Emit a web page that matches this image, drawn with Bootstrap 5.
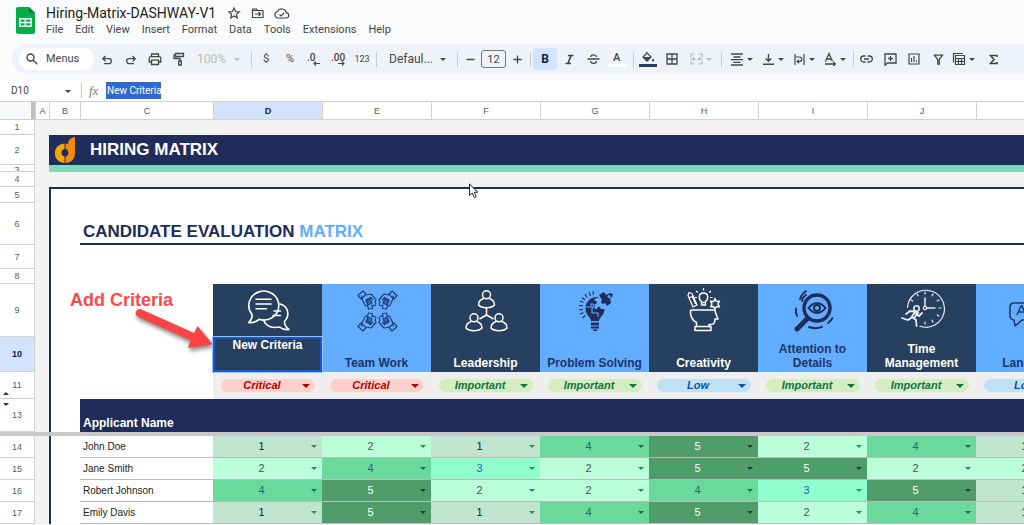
<!DOCTYPE html>
<html lang="en">
<head>
<meta charset="utf-8">
<meta name="viewport" content="width=device-width, initial-scale=1">
<title>Hiring-Matrix-DASHWAY-V1</title>
<link href="https://cdn.jsdelivr.net/npm/bootstrap@5.3.0/dist/css/bootstrap.min.css" rel="stylesheet">
<style>
  :root { --navy: #202c5a; --slate: #28405f; --sky: #62adff; --grid: #cfd1d3; --ink: #444746; }
  body { background: #f9fbfd; color: var(--ink); font-family: Roboto, sans-serif; font-size: 12px; line-height: 16px; overflow: hidden; }
  svg { display: block; flex: none; }
  button, select, input { font: inherit; color: inherit; border: 0; background: none; padding: 0; }

  /* title and menus */
  .app-head { padding: 5px 12px 0 16px; height: 44px; }
  .app-logo { margin: 2px 11px 0 0; }
  .doc-title { font-size: 14px; font-weight: 400; line-height: 16px; color: #1f1f1f; }
  .doc-icons { margin-left: 12px; }
  .menus { gap: 12px; font-size: 11px; margin-top: 1px; }
  .menus a { color: var(--ink); text-decoration: none; }

  /* toolbar */
  .tools { background: #eff3f9; height: 30px; margin-left: 12px; padding-left: 7px; border-radius: 15px 0 0 15px; margin-bottom: 6px; overflow: hidden; }
  .search { background: #fff; width: 75px; height: 22px; border-radius: 11px; padding-left: 7px; gap: 8px; margin-right: 1px; flex: none; font-size: 11px; }
  .tool { width: 24px; height: 22px; display: flex; align-items: center; justify-content: center; flex: none; font-size: 11px; border-radius: 3px; }
  .tool-wide { width: 31px; justify-content: flex-start; gap: 3px; padding-left: 2px; }
  .tool.on { background: #d3e3fd; color: #041e49; }
  .rule { width: 1px; height: 15px; background: #c7cbd0; margin: 0 2px; flex: none; }
  .caret { width: 0; height: 0; border: 3px solid transparent; border-top-color: currentColor; border-bottom-width: 0; flex: none; }
  .pick { position: relative; flex: none; }
  .pick select { appearance: none; width: 100%; }
  .pick .caret { position: absolute; top: 50%; right: 9px; margin-top: -1px; pointer-events: none; }
  .zoom-pick { width: 58px; padding-left: 6px; color: #b7babd; font-size: 12px; }
  .font-pick { width: 76px; padding-left: 10px; font-size: 12px; }
  .size-box { width: 25px; height: 18px; border: 1px solid #747775; border-radius: 3px; text-align: center; font-size: 11px; margin-left: 1px; flex: none; }

  /* formula bar */
  .formula { background: #fff; height: 21px; padding-left: 11px; font-size: 10px; }
  .name-pick { width: 68px; }
  .name-pick .caret { right: 8px; }
  .cell-text { background: #3367d6; color: #fff; width: 55px; height: 17px; padding-left: 1px; margin-left: 4px; }

  /* sheet */
  .sheet { position: relative; overflow: hidden; background: #f2f2f2; font-family: "Liberation Sans", Arial, sans-serif; }
  .cells { table-layout: fixed; width: max(100%, 1085px); border-collapse: separate; border-spacing: 0; color: #222; font-size: 10px; line-height: 12px; }
  .cells td, .cells th { padding: 0; font-weight: 400; overflow: hidden; }
  .c-num { width: 35px; } .c-a { width: 14px; } .c-b { width: 31px; } .c-c { width: 133px; } .c-v { width: 109px; }
  .cells thead th { height: 19px; background: #fff; border: 0 solid var(--grid); border-width: 1px 0 1px 1px; text-align: center; font-size: 9px; color: #575b5f; }
  .cells thead th.corner { background: #f8f9fa; border-left: 0; border-right: 4px solid #c0c0c0; }
  .cells thead th.on, .cells .num.on { background: #d3e3fd; color: #041e49; font-weight: 700; }
  .cells .num { position: relative; background: #fff; border-right: 1px solid var(--grid); border-bottom: 1px solid var(--grid); text-align: center; font-size: 9px; color: #575b5f; }
  .num .clip { height: 6px; line-height: 10px; overflow: hidden; }
  .mark-up, .mark-down { position: absolute; left: 3px; border: 3px solid transparent; color: #333; }
  .mark-up { bottom: 3px; border-bottom-color: currentColor; border-top-width: 0; }
  .mark-down { top: 4px; border-top-color: currentColor; border-bottom-width: 0; }
  .h7 { height: 7px; } .h15 { height: 15px; } .h16 { height: 16px; } .h22 { height: 22px; } .h24 { height: 24px; } .h27 { height: 27px; }
  .h30 { height: 30px; } .h33 { height: 33px; } .h35 { height: 35px; } .h42 { height: 42px; } .h53 { height: 53px; }
  .paper { background: #fff; }
  .edge { border-left: 2px solid var(--navy); background: #fff; }
  .top-edge { border-top: 2px solid var(--navy); }
  .banner { background: var(--navy); color: #fff; font-size: 17px; line-height: 30px; font-weight: 700; padding-left: 6px; gap: 14px; }
  .teal { background: #80d8bc; }
  .section { font-size: 17px; line-height: 22px; font-weight: 700; color: var(--navy); padding-left: 3px; border-bottom: 2px solid var(--navy); height: 42px; padding-top: 18px; }
  .section span { color: var(--sky); }
  .cells td.dark, .cells th.dark { background: var(--slate); color: #fff; }
  .cells td.light, .cells th.light { background: var(--sky); color: #203468; }
  .pic { vertical-align: top; }
  .pic svg { margin: 3px auto 0; }
  .cells th.crit { font-size: 12px; line-height: 14px; font-weight: 700; text-align: center; vertical-align: bottom; padding-bottom: 2px; }
  .cells th.crit.picked { vertical-align: top; padding-top: 1px; box-shadow: inset 0 0 0 2px #1259cf; outline: 1px solid #9cc0f8; position: relative; z-index: 1; overflow: visible; }
  .weights { background: #eee; }
  .pill { position: relative; display: block; margin: 0 7px 0 8px; height: 13px; border-radius: 7px; font: italic 700 11px/13px "Liberation Sans", Arial, sans-serif; }
  .pill select, .score select { appearance: none; display: block; width: 100%; height: 100%; text-align: center; text-align-last: center; padding-right: 12px; }
  .pill .caret, .score .caret { position: absolute; top: 50%; margin-top: -2px; pointer-events: none; }
  .pill .caret { right: 5px; border-width: 4px 4px 0; }
  .Critical { background: #ffcfc9; color: #b10202; } .Important { background: #d4edbc; color: #11734b; } .Low { background: #bfe1f6; color: #0a53a8; }
  .cells th.who-head { background: var(--navy); color: #fff; font-size: 12px; line-height: 14px; font-weight: 700; vertical-align: bottom; padding: 0 0 2px 3px; }
  .freeze { height: 4px; background: #c8c8c8; }
  .cells th.who { background: #fff; padding-left: 3px; color: #222; }
  .cells .line { border-bottom: 1px solid #b9bcbb; }
  .score { position: relative; display: block; height: 21px; font-size: 11px; line-height: 21px; }
  .score .caret { right: 5px; }
  .v1 { background: #bfe5cf; color: #222; } .v1 .caret { color: #3b8a5f; }
  .v2 { background: #bbffda; color: #4d5548; } .v2 .caret { color: #109b4c; }
  .v3 { background: #8fffce; color: #2463b4; } .v3 .caret { color: #189a62; }
  .v4 { background: #6ada9c; color: #256573; } .v4 .caret { color: #1f6b45; }
  .v5 { background: #4f9d69; color: #fff; } .v5 .caret { color: #20402e; }
  .note { position: absolute; left: 70px; top: 189px; color: #fb4a4a; font-weight: 700; font-size: 18px; line-height: 20px; }
  .note-arrow { position: absolute; left: 130px; top: 203px; filter: drop-shadow(1px 3px 2px #0007); }
  .pointer { position: absolute; left: 468px; top: 82px; }
</style>
</head>
<body>
<header class="app-head d-flex">
  <svg class="app-logo" width="19" height="27" viewBox="0 0 19 27"><path d="M2 0h11l6 6v19a2 2 0 0 1-2 2H2a2 2 0 0 1-2-2V2a2 2 0 0 1 2-2z" fill="#0caa4b"/><path d="M13 0l6 6h-6z" fill="#07803a"/><path d="M3 11h13v9H3zM4.500 12.500v2.200h4.200v-2.200zm5.700 0v2.200h4.300v-2.200zm-5.700 3.700v2.300h4.200v-2.300zm5.700 0v2.300h4.300v-2.300z" fill="#fff" fill-rule="evenodd"/></svg>
  <div>
    <div class="d-flex align-items-center">
      <h1 class="doc-title m-0">Hiring-Matrix-DASHWAY-V1</h1>
      <svg class="doc-icons" width="62" height="14" viewBox="0 0 62 14" fill="none" stroke="#444746" stroke-width="1.200"><path d="M6 2l1.500 3.500 3.800.3-2.900 2.500.9 3.700L6 10l-3.300 2 .9-3.700L.7 5.800l3.800-.3z"/><path d="M24.500 3h4l1.300 1.500H35v7H24.500zM24.500 4.500h5M27 8h5.500m-2-2l2 2-2 2"/><path d="M52 12h6a2.600 2.600 0 0 0 .3-5.200A4.700 4.700 0 0 0 49.500 5.500 3.300 3.300 0 0 0 50 12zM51.500 8.500l1.600 1.500 3-3"/></svg>
    </div>
    <nav class="menus d-flex" aria-label="Menus">
      <a href="#">File</a><a href="#">Edit</a><a href="#">View</a><a href="#">Insert</a><a href="#">Format</a><a href="#">Data</a><a href="#">Tools</a><a href="#">Extensions</a><a href="#">Help</a>
    </nav>
  </div>
</header>

<div class="tools d-flex align-items-center" role="toolbar" aria-label="Formatting">
  <button class="search d-flex align-items-center"><svg width="12" height="12" viewBox="0 0 12 12" fill="none" stroke="#444746" stroke-width="1.400"><circle cx="4.500" cy="4.500" r="3.500"/><path d="M7 7l4.300 4.300"/></svg>Menus</button>
  <button class="tool" aria-label="Undo"><svg width="12" height="12" viewBox="0 0 12 12" fill="none" stroke="#444746" stroke-width="1.300"><path d="M4.500 3L1.800 5.700l2.700 2.700M2 5.700h5.800a2.500 2.500 0 0 1 0 5H3"/></svg></button>
  <button class="tool" aria-label="Redo"><svg width="12" height="12" viewBox="0 0 12 12" fill="none" stroke="#444746" stroke-width="1.300"><path d="M7.500 3l2.700 2.700-2.700 2.700M10 5.700H4.200a2.500 2.500 0 0 0 0 5H9"/></svg></button>
  <button class="tool" aria-label="Print"><svg width="14" height="14" viewBox="0 0 14 14" fill="none" stroke="#444746" stroke-width="1.300"><path d="M3.500 4.500V2h7v2.500M3.500 10H1.200V6.200a1.500 1.500 0 0 1 1.500-1.500h8.600a1.500 1.500 0 0 1 1.500 1.500V10h-2.300M3.500 8.200h7v4.300h-7z"/></svg></button>
  <button class="tool" aria-label="Paint format"><svg width="12" height="14" viewBox="0 0 12 14" fill="none" stroke="#444746" stroke-width="1.300"><path d="M2.500 1.500h8v3h-8zM2.500 3H1v3.500h6V9M5.700 9h2.600v4H5.700z"/></svg></button>
  <div class="pick zoom-pick"><select aria-label="Zoom"><option>100%</option></select><i class="caret"></i></div>
  <i class="rule"></i>
  <button class="tool">$</button><button class="tool">%</button>
  <button class="tool" aria-label="Decrease decimals"><svg width="16" height="16" viewBox="0 0 16 16"><text x="1" y="10" font-size="10" font-weight="500" fill="#444746">.0</text><path d="M8 12.500h6M10 10.500l-2 2 2 2" fill="none" stroke="#444746" stroke-width="1.100"/></svg></button>
  <button class="tool" aria-label="Increase decimals"><svg width="16" height="16" viewBox="0 0 16 16"><text x="1" y="10" font-size="10" font-weight="500" fill="#444746">.00</text><path d="M8 12.500h6M12 10.500l2 2-2 2" fill="none" stroke="#444746" stroke-width="1.100"/></svg></button>
  <button class="tool" style="font-size:9px">123</button>
  <i class="rule"></i>
  <div class="pick font-pick"><select aria-label="Font"><option>Defaul...</option></select><i class="caret"></i></div>
  <i class="rule"></i>
  <button class="tool" style="width:20px" aria-label="Smaller"><svg width="9" height="9" viewBox="0 0 9 9"><path d="M.5 4.500h8" stroke="#444746" stroke-width="1.300"/></svg></button>
  <input class="size-box" value="12" aria-label="Font size">
  <button class="tool" style="width:22px" aria-label="Larger"><svg width="9" height="9" viewBox="0 0 9 9"><path d="M.5 4.500h8M4.500.5v8" stroke="#444746" stroke-width="1.300"/></svg></button>
  <i class="rule"></i>
  <button class="tool on fw-bold" style="font-size:12px">B</button>
  <button class="tool" aria-label="Italic"><svg width="9" height="11" viewBox="0 0 9 11" fill="none" stroke="#444746" stroke-width="1.700"><path d="M3 1.500h5.500M.5 9.500H6M6 1.500l-3 8"/></svg></button>
  <button class="tool" aria-label="Strikethrough"><svg width="13" height="12" viewBox="0 0 13 12" fill="none" stroke="#444746" stroke-width="1.300"><path d="M.5 6h12M9.500 3.800C9.200 2.500 8 1.800 6.500 1.800 4.700 1.800 3.600 2.700 3.600 4M3.500 8c.2 1.500 1.400 2.300 3 2.300 1.800 0 3-.9 3-2.300"/></svg></button>
  <button class="tool" style="margin-right:2px" aria-label="Text color"><svg width="18" height="17" viewBox="0 0 18 17"><text x="5" y="10" font-size="11" font-weight="500" fill="#444746">A</text><path d="M0 13h18v3H0z" fill="#fff"/></svg></button>
  <i class="rule"></i>
  <button class="tool" aria-label="Fill color"><svg width="18" height="17" viewBox="0 0 18 17"><path d="M7 1l5 5-4 4-4-4 4-4z" fill="none" stroke="#444746" stroke-width="1.300"/><path d="M4 6h8l-4 4zM14 7.500c1.600 2 1.600 3 0 3s-1.500-1 0-3z" fill="#444746"/><path d="M0 13h18v3H0z" fill="#28405f"/></svg></button>
  <button class="tool" aria-label="Borders"><svg width="12" height="12" viewBox="0 0 12 12" fill="none" stroke="#444746" stroke-width="1.300"><path d="M1 1h10v10H1zM6 1v10M1 6h10"/></svg></button>
  <button class="tool tool-wide ms-1" style="color:#b5b8bb" aria-label="Merge"><svg width="13" height="12" viewBox="0 0 13 12" fill="none" stroke="currentColor" stroke-width="1.200"><path d="M4.500 1H1v3M8.500 1H12v3M1 8v3h3.500M12 8v3H8.500M0 6h4.500M3 4.300L4.700 6 3 7.700M13 6H8.500M10 4.300L8.300 6 10 7.700"/></svg><i class="caret"></i></button>
  <i class="rule"></i>
  <button class="tool tool-wide ms-1" aria-label="Horizontal align"><svg width="14" height="14" viewBox="0 0 14 14" stroke="#444746" stroke-width="1.300"><path d="M1 2h12M3.500 5h7M1 7.700h12M3.500 10.300h7M1 13h12"/></svg><i class="caret"></i></button>
  <button class="tool tool-wide" aria-label="Vertical align"><svg width="14" height="14" viewBox="0 0 14 14" fill="none" stroke="#444746" stroke-width="1.400"><path d="M2 12.300h11M7.500 2v7M4.800 6.600l2.700 2.700 2.700-2.700"/></svg><i class="caret"></i></button>
  <button class="tool tool-wide" aria-label="Wrap"><svg width="14" height="14" viewBox="0 0 14 14" fill="none" stroke="#444746" stroke-width="1.200"><path d="M3 2v11M12 2v11M4 5h3.500a2 2 0 0 1 0 4.500H5.500M7 7.700L5.200 9.500 7 11.300"/></svg><i class="caret"></i></button>
  <button class="tool tool-wide" aria-label="Rotate"><svg width="14" height="14" viewBox="0 0 14 14" fill="none" stroke="#444746" stroke-width="1.300"><path d="M2.500 9.500L6 1.500l3.500 8M3.700 7h4.600M2 12h10M10.300 10l2 2-2 2"/></svg><i class="caret"></i></button>
  <i class="rule" style="margin:0 0 0 1px"></i>
  <button class="tool" aria-label="Link"><svg width="13" height="8" viewBox="0 0 13 8" fill="none" stroke="#444746" stroke-width="1.300"><path d="M5.500 1H3.700a3 3 0 0 0 0 6h1.800M7.500 1h1.800a3 3 0 0 1 0 6H7.500M4 4h5"/></svg></button>
  <button class="tool" aria-label="Comment"><svg width="13" height="13" viewBox="0 0 13 13" fill="none" stroke="#444746" stroke-width="1.300"><path d="M1 1h11v9H3.500L1 12.300zM6.500 3v5M4 5.500h5"/></svg></button>
  <button class="tool" aria-label="Chart"><svg width="12" height="12" viewBox="0 0 12 12" fill="none" stroke="#444746" stroke-width="1.200"><path d="M1 1h10v10H1zM3.500 9V5M6 9V3M8.500 9V7.500"/></svg></button>
  <button class="tool" aria-label="Filter"><svg width="11" height="11" viewBox="0 0 11 11" fill="none" stroke="#444746" stroke-width="1.300"><path d="M1.500 1.200h8L6.300 5.500v4.700H4.700V5.500z"/></svg></button>
  <button class="tool tool-wide" aria-label="Tables"><svg width="14" height="14" viewBox="0 0 14 14" fill="none" stroke="#444746" stroke-width="1.200"><path d="M1.500 10.500V1.500H11M3.500 3.500h9v9h-9zM3.500 6.500h9M3.500 9.500h9M6.500 6.500v6M9.500 6.500v6"/></svg><i class="caret"></i></button>
  <button class="tool" aria-label="Functions"><svg width="9" height="11" viewBox="0 0 9 11" fill="none" stroke="#444746" stroke-width="1.600"><path d="M8 3V1.500H1.500l3.500 4-3.500 4H8V8"/></svg></button>
</div>

<div class="formula d-flex align-items-center">
  <div class="pick name-pick"><select aria-label="Cell"><option>D10</option></select><i class="caret"></i></div>
  <i class="rule"></i>
  <svg class="ms-1" width="14" height="14" viewBox="0 0 14 14"><text x="1" y="11" font-family="Liberation Serif" font-style="italic" font-size="13" fill="#777">fx</text></svg>
  <input class="cell-text" value="New Criteria" aria-label="Cell contents">
</div>

<main class="sheet">
  <table class="cells">
    <colgroup><col class="c-num"><col class="c-a"><col class="c-b"><col class="c-c"><col class="c-v"><col class="c-v"><col class="c-v"><col class="c-v"><col class="c-v"><col class="c-v"><col class="c-v"><col></colgroup>
    <thead><tr><th class="corner"></th><th>A</th><th>B</th><th>C</th><th class="on">D</th><th>E</th><th>F</th><th>G</th><th>H</th><th>I</th><th>J</th><th>K</th></tr></thead>
    <tbody id="rows">
      <tr class="h15"><th class="num">1</th><td colspan="11"></td></tr>
      <tr class="h30"><th class="num">2</th><td></td><td colspan="10"><div class="banner d-flex align-items-center">
        <svg width="21" height="28" viewBox="0 0 21 28"><path d="M9.500 7.500V13a4 4 0 0 0 0 7.700V27A9.700 9.700 0 0 1 9.500 7.500z" fill="#f5a507"/><path d="M20 1v16.500C20 23 16 27 10.500 27v-6.300a4 4 0 0 0 0-7.700V7.500q1.500 0 2.500.5c0-4 3-6.500 7-7z" fill="#f28a10"/><path d="M10 21v6" stroke="#a35f10"/></svg>HIRING MATRIX</div></td></tr>
      <tr class="h7"><th class="num"><div class="clip">3</div></th><td></td><td class="teal" colspan="10"></td></tr>
      <tr class="h15"><th class="num">4</th><td colspan="11"></td></tr>
      <tr class="h16"><th class="num">5</th><td></td><td class="edge top-edge" colspan="10"></td></tr>
      <tr class="h42"><th class="num">6</th><td></td><td class="edge"></td><td class="paper" colspan="9"><div class="section">CANDIDATE EVALUATION <span>MATRIX</span></div></td></tr>
      <tr class="h24"><th class="num">7</th><td></td><td class="edge" colspan="10"></td></tr>
      <tr class="h15"><th class="num">8</th><td></td><td class="edge" colspan="10"></td></tr>
      <tr class="h53"><th class="num">9</th><td></td><td class="edge"></td><td class="paper"></td>
        <td class="pic dark"><svg width="48" height="48" viewBox="0 0 48 48" fill="none" stroke="#fff" stroke-width="1.600" stroke-linejoin="round" stroke-linecap="round"><path d="M8 27.500A15 14.500 0 1 1 15 32.300C12 35 8 36 4.500 35.500 7 33.500 8.300 31 8 27.500zM12 12.300h15M12 17h15M12 21.700h10.500"/><path d="M36 17c8 2 10.500 11 4.500 17.500 0 3.500 1.500 6 4.500 8-4 .5-7-.3-9.500-2.500C28 41.500 22 39 20 34M30 24h6.500M29 28.500h7.500"/></svg></td>
        <td class="pic light"><svg width="48" height="48" viewBox="0 0 48 48" fill="none" stroke="#203d7c" stroke-width="1.200" stroke-linejoin="round"><g id="hand"><path d="M5 8.500l5-4.500 3 3.500-5 4.500zM12.500 8l5.500-1 5 5.500-1 2.500 1 2-1.500 2-2.500-1 .5 3.500-4 .5-1-3.500-2 .5-3-6-1-4.500M14 12l2 2m-3 0l2 2m2-6l3 3"/><path d="M13 13l4-2 2 5-4 2z" fill="#203d7c" fill-opacity=".6"/></g><use href="#hand" transform="matrix(-1 0 0 1 49 0)"/><use href="#hand" transform="matrix(1 0 0 -1 0 48)"/><use href="#hand" transform="matrix(-1 0 0 -1 49 48)"/></svg></td>
        <td class="pic dark"><svg width="48" height="48" viewBox="0 0 48 48" fill="none" stroke="#fff" stroke-width="1.500"><g id="person"><circle cx="24.500" cy="7.800" r="4"/><path d="M21.500 11.500c-3 1-5 3.500-5 6.500 3 3.500 13 3.500 16 0 0-3-2-5.500-5-6.500"/></g><use href="#person" x="-12.500" y="23"/><use href="#person" x="12.500" y="23"/><path d="M24.500 20.500V28l-7 4M24.500 28l7 4"/></svg></td>
        <td class="pic light"><svg width="48" height="48" viewBox="0 0 48 48" fill="#202c5a"><path d="M28 10c-8-1-14 5-13.500 12 .3 6 5 8 5.500 12h8c.5-4 5.500-6 5.500-12h-4c1-3-4-3-3 0h-3v-5c3 1 3-4 0-3v-2z"/><path d="M28 8l5-3 2 3 4-2 3 1-1 3-2 1 1 5-4 3-2-3c-3 2-5 0-3-3z"/><path d="M20 35.500h8v3h-8zM20 39.500h8v2h-8zM22 42.500h4v1.500h-4z"/><path d="M15 20h5v-3c3-1 3 3 1 4v5h6v4" fill="none" stroke="#62adff" stroke-width="1.100"/><g fill="none" stroke="#202c5a" stroke-width="1.100"><path d="M22 4l.5 4M18 5l1.500 4M14 7l2 3.500M11 10.500l3 2.500M9 14l3.500 1.500M8 18.500l4 .3M8 23l4-.5M9 27l3.500-1.500M11.500 31l3-2.500"/></g><circle cx="38" cy="9.500" r="1.500" fill="#62adff"/></svg></td>
        <td class="pic dark"><svg width="48" height="48" viewBox="0 0 48 48" fill="none" stroke="#fff" stroke-width="1.500" stroke-linejoin="round"><path d="M10.500 23h24.500c0 3 2 6 3 9h-3c0 4-1 6-6 5.500v3M10.500 23c-.5 6 1 10 6 12.500v5M15 39.500h16v4H15z"/><path d="M21.500 14.500c-3-2-3.500-8.500 2-8.500s5 6.500 2 8.500v3.500h-4zM21.500 15.500h4" stroke-width="1.400"/><path d="M23.500 1v2.500M16 4l2 1.500M31 4l-2 1.500M14.500 10.500H17M30 10.500h2.500" stroke-width="1.200"/><path d="M8 8.500l1-3 3 1 5 11.500-4 2zM9 11l4-2M12.500 10l3 7" stroke-width="1.200"/><path d="M35 11.500l1.300 3 3.200-.3-1.500 2.800 1.500 2.800-3-.3-1.500 2.500-1.500-2.500-3 .3 1.500-2.800-1.500-2.800 3.200.3z" stroke-width="1.400"/></svg></td>
        <td class="pic light"><svg width="48" height="48" viewBox="0 0 48 48" fill="none" stroke="#202c5a" stroke-linecap="round"><circle cx="28" cy="21" r="13" stroke-width="3.400"/><path d="M18 32L8 42" stroke-width="5"/><path d="M19.500 21c5-6.500 12-6.500 17 0-5 6.500-12 6.500-17 0z" stroke-width="2"/><circle cx="28" cy="21" r="3" stroke-width="2"/><path d="M11 12c1-3 3-6 6-8M7 21.500c-.3 3 0 5 1 7.500M13 14c0-2 2-5 4-6M20 40c4 1.500 9 1.500 13-.2M39 36c2-1.500 3.500-3 4.500-5" stroke-width="1.900"/></svg></td>
        <td class="pic dark"><svg width="48" height="48" viewBox="0 0 48 48" fill="none" stroke="#e8edf3" stroke-width="1.200" stroke-linecap="round"><path d="M9.500 20.500A18.500 18.500 0 1 1 22 39.300"/><circle cx="27" cy="21" r="1.700"/><path d="M27 11v8M29 21h8" stroke-width="1.500"/><path d="M27 5v2M27 35v2M43 21h-2M35 7l-1 1.800M41 13l-1.800 1M41 29l-1.800-1M35 35l-1-1.800M19 7l1 1.800M13 13l1.800 1"/><circle cx="18.500" cy="21.500" r="2.700" stroke-width="1.600"/><path d="M16 24.500l-4-.5-4 3M17 25l-4 6-3 2-6-2M18 27l3 2 3-3M14 30l4 3 .5 6M16 24l4 2-4 5" stroke-width="1.800"/></svg></td>
        <td class="pic light"><svg width="48" height="48" viewBox="0 0 48 48" fill="none" stroke="#203468" stroke-width="1.500" stroke-linejoin="round"><path d="M25 16H6a4 4 0 0 0-3 4v9a4 4 0 0 0 4 4l1 6 7-6h10zM10 28l4-9h1l4 9M11.500 25h6"/><path d="M27 10h14a4 4 0 0 1 4 4v12a4 4 0 0 1-4 4v5l-6-5h-8"/></svg></td></tr>
      <tr class="h35" id="criteria"><th class="num on">10</th><td></td><td class="edge"></td><td class="paper"></td>
        <th class="crit dark picked">New Criteria</th><th class="crit light">Team Work</th><th class="crit dark">Leadership</th><th class="crit light">Problem Solving</th><th class="crit dark">Creativity</th><th class="crit light">Attention to<br>Details</th><th class="crit dark">Time<br>Management</th><th class="crit light">Language</th></tr>
      <tr class="h27" id="weights"><th class="num">11<i class="mark-up"></i></th><td></td><td class="edge"></td><td class="paper"></td></tr>
      <tr class="h33"><th class="num">13<i class="mark-down"></i></th><td></td><td class="edge"></td><th class="who-head" colspan="9">Applicant Name</th></tr>
      <tr><td class="freeze" colspan="12"></td></tr>
    </tbody>
  </table>
  <div class="note">Add Criteria</div>
  <svg class="note-arrow" width="90" height="50" viewBox="0 0 90 50"><path d="M11.500 5.500a4 4 0 0 0-3.500 7.200L60.500 36.500 58 44l25-3.500L67.500 22 64 29z" fill="#fb4444"/></svg>
  <svg class="pointer" width="11" height="16" viewBox="0 0 11 16"><path d="M1.500 1v11.500l2.700-2.500 2 4.500 2-1-2-4.300h3.600z" fill="#fff" stroke="#222"/></svg>
</main>

<script src="https://cdn.jsdelivr.net/npm/bootstrap@5.3.0/dist/js/bootstrap.bundle.min.js"></script>
<script>
  const levels = ['Critical', 'Important', 'Low'];
  const criteria = ['New Criteria', 'Team Work', 'Leadership', 'Problem Solving', 'Creativity', 'Attention to Details', 'Time Management', 'Language'];
  const weights = ['Critical', 'Critical', 'Important', 'Important', 'Low', 'Important', 'Important', 'Low'];
  const people = [
    ['John Doe', [1, 2, 1, 4, 5, 2, 4, 1]],
    ['Jane Smith', [2, 4, 3, 2, 5, 5, 2, 2]],
    ['Robert Johnson', [4, 5, 2, 2, 4, 3, 5, 1]],
    ['Emily Davis', [1, 5, 1, 4, 5, 2, 4, 1]]
  ];
  const picker = (list, value, label) =>
    `<select aria-label="${label}">${list.map(o => `<option${o === value ? ' selected' : ''}>${o}</option>`).join('')}</select><i class="caret"></i>`;

  document.getElementById('weights').insertAdjacentHTML('beforeend', weights.map((w, i) =>
    `<td class="weights"><span class="pill ${w}">${picker(levels, w, criteria[i] + ' weight')}</span></td>`).join(''));

  document.getElementById('rows').insertAdjacentHTML('beforeend', people.map(([name, scores], r) =>
    `<tr class="h22"><th class="num">${14 + r}</th><td></td><td class="edge"></td><th class="who line">${name}</th>` +
    scores.map((s, i) => `<td class="line"><span class="score v${s}">${picker([1, 2, 3, 4, 5], s, name + ', ' + criteria[i])}</span></td>`).join('') + '</tr>').join(''));
</script>
</body>
</html>
